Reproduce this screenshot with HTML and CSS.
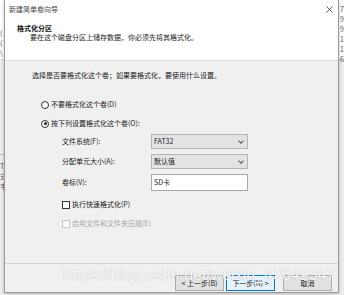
FILE: index.html
```html
<!DOCTYPE html>
<html lang="zh-CN">
<head>
    <meta charset="UTF-8">
    <title>新建简单卷向导</title>
    <link rel="stylesheet" href="styles.css">
</head>
<body>
<div class="desk">
    <div class="edge edge-left">
        <div class="edge-top">(<br>(<br>\</div>
        <div class="edge-low">T<br>式<br>韦</div>
    </div>
    <div class="dialog">
        <div class="titlebar">
            <span class="title">新建简单卷向导</span>
            <svg class="close" width="7" height="7" viewBox="0 0 7 7">
                <path d="M0.5 0.5 L6.5 6.5 M6.5 0.5 L0.5 6.5" stroke="#333" stroke-width="0.8"/>
            </svg>
        </div>
        <div class="header">
            <div class="h-title">格式化分区</div>
            <div class="h-sub">要在这个磁盘分区上储存数据，你必须先将其格式化。</div>
        </div>
        <div class="body">
            <p class="intro">选择是否要格式化这个卷；如果要格式化，要使用什么设置。</p>
            <div class="radio radio-first"><span class="dot"></span>不要格式化这个卷(D)</div>
            <div class="radio radio-second"><span class="dot on"></span>按下列设置格式化这个卷(O):</div>
            <div class="fields">
                <div class="field">
                    <span class="label">文件系统(F):</span>
                    <span class="select">FAT32<span class="chev"></span></span>
                </div>
                <div class="field">
                    <span class="label">分配单元大小(A):</span>
                    <span class="select">默认值<span class="chev"></span></span>
                </div>
                <div class="field field-tall">
                    <span class="label">卷标(V):</span>
                    <span class="input">SD卡</span>
                </div>
            </div>
            <div class="check check-first"><span class="box"></span>执行快速格式化(P)</div>
            <div class="check check-off"><span class="box"></span>启用文件和文件夹压缩(E)</div>
        </div>
        <div class="footer">
            <span class="btn">&lt; 上一步(B)</span>
            <span class="btn btn-focus">下一步(N) &gt;</span>
            <span class="btn btn-cancel">取消</span>
        </div>
        <div class="watermark">https://blog.csdn.net/weixin_43649347</div>
    </div>
    <div class="edge edge-right">
        <div class="edge-top">7<br>9<br>9<br>1<br>1<br>6</div>
    </div>
</div>
</body>
</html>
```

FILE: styles.css
```css
body {
    margin: 0;
    font-family: "Noto Sans CJK SC", "Liberation Sans", sans-serif;
    font-size: 7px;
    color: #222;
    background: #f0f0f0;
}

.desk {
    display: flex;
    width: 344px;
    height: 295px;
    overflow: hidden;
}

/* bits of the window behind the dialog */
.edge {
    overflow: hidden;
    background: #ececec;
    color: #555;
    line-height: 10px;
}

.edge-left {
    width: 4px;
}

.edge-right {
    width: 5px;
}

.edge-top {
    height: 60px;
    background: #fff;
    border-bottom: 1px solid #ddd;
    box-sizing: border-box;
    padding-top: 4px;
}

.edge-left .edge-top {
    padding-top: 28px;
}

.edge-low {
    margin-top: 94px;
    border-top: 1px solid #bbb;
    padding-top: 6px;
}

.edge-right .edge-top {
    padding-left: 1px;
}

.dialog {
    position: relative;
    width: 335px;
    height: 293px;
    box-sizing: border-box;
    border: 1px solid #9a9a9a;
    border-top: none;
    background: #f0f0f0;
    box-shadow: 0 1px 3px rgba(0, 0, 0, 0.25);
}

.titlebar {
    height: 18px;
    display: flex;
    align-items: center;
    justify-content: space-between;
    padding: 0 5px 0 4px;
    background: #fff;
}

.title {
    color: #444;
}

.header {
    height: 43px;
    box-sizing: border-box;
    padding-top: 6px;
    background: #fff;
    border-bottom: 1px solid #dadada;
    line-height: 9px;
}

.h-title {
    padding-left: 12px;
    font-weight: bold;
    color: #111;
}

.h-sub {
    padding-left: 25px;
}

.body {
    height: 192px;
    line-height: 9px;
}

.intro {
    margin: 10px 0 0 27px;
}

.radio {
    display: flex;
    align-items: center;
    padding-left: 36px;
}

.radio-first {
    margin-top: 20px;
}

.radio-second {
    margin-top: 10px;
}

.dot {
    width: 6px;
    height: 6px;
    border: 1px solid #333;
    border-radius: 50%;
    background: #fff;
    margin-right: 2px;
    position: relative;
}

.dot.on::after {
    content: "";
    position: absolute;
    left: 1.5px;
    top: 1.5px;
    width: 3px;
    height: 3px;
    border-radius: 50%;
    background: #222;
}

.fields {
    display: flex;
    flex-direction: column;
    gap: 5px;
    margin-top: 6px;
    padding-left: 57px;
}

.field {
    display: flex;
    align-items: center;
    height: 15px;
}

.field-tall {
    height: 17px;
}

.label {
    width: 89px;
}

.select,
.input {
    position: relative;
    width: 97px;
    height: 100%;
    box-sizing: border-box;
    display: flex;
    align-items: center;
    padding-left: 2px;
    border: 1px solid #b4b4b4;
    background: #e3e3e3;
}

.input {
    background: #fff;
    border-color: #a8a8a8;
}

.chev {
    position: absolute;
    right: 4px;
    top: 4px;
    width: 3px;
    height: 3px;
    border-right: 1px solid #555;
    border-bottom: 1px solid #555;
    transform: rotate(45deg);
}

.check {
    display: flex;
    align-items: center;
    padding-left: 57px;
}

.check-first {
    margin-top: 9px;
}

.check-off {
    margin-top: 10px;
    color: #a8a8a8;
}

.box {
    width: 6px;
    height: 6px;
    border: 1px solid #333;
    background: #fff;
    margin-right: 2px;
}

.check-off .box {
    border-color: #c8c8c8;
}

.footer {
    border-top: 1px solid #d0d0d0;
    display: flex;
    justify-content: flex-end;
    gap: 2px;
    padding: 11px 6px 0 0;
}

.btn {
    width: 49px;
    height: 16px;
    box-sizing: border-box;
    display: flex;
    align-items: center;
    justify-content: center;
    border: 1px solid #adadad;
    background: #e1e1e1;
}

.btn-focus {
    border-color: #0078d7;
    background: #e5f1fb;
}

.btn-cancel {
    margin-left: 6px;
}

.watermark {
    position: absolute;
    left: 58px;
    top: 266px;
    font-family: "Liberation Sans", sans-serif;
    font-size: 16px;
    color: rgba(255, 255, 255, 0.95);
    text-shadow: 0 0 1px rgba(0, 0, 0, 0.3);
    white-space: nowrap;
}
```
